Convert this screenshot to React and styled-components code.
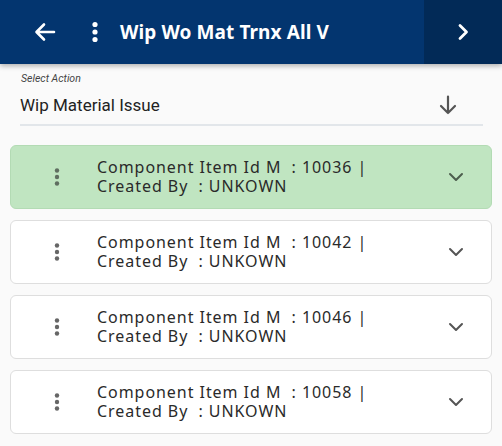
import React from "react";
import styled, { createGlobalStyle } from "styled-components";

const Global = createGlobalStyle`
  html, body {
    margin: 0;
    padding: 0;
    background: #fafafa;
    font-family: "Noto Sans", "Open Sans", sans-serif;
  }
`;

const Page = styled.div`
  width: 502px;
  height: 446px;
  overflow: hidden;
  background: #fafafa;
`;

const Header = styled.header`
  height: 64px;
  display: flex;
  background: #03356f;
  box-shadow: 0 2px 5px rgba(0, 0, 0, 0.3);
  position: relative;
  z-index: 1;
`;

const HeaderMain = styled.div`
  flex: 1;
  display: flex;
  align-items: center;
  padding-left: 33px;
`;

const IconBtn = styled.div`
  width: ${(p) => p.w || 24}px;
  margin-right: ${(p) => p.mr || 0}px;
  display: flex;
  align-items: center;
  justify-content: center;
  color: #fff;
`;

const Title = styled.h1`
  margin: 0;
  font-size: 19px;
  font-weight: 700;
  color: #fff;
  letter-spacing: 0.1px;
`;

const NextBox = styled.div`
  width: 78px;
  display: flex;
  align-items: center;
  justify-content: center;
  background: #022a57;
`;

const ActionField = styled.div`
  margin: 0 19px 0 20px;
  padding-top: 9px;
  border-bottom: 2px solid #e2e6ea;
`;

const FieldLabel = styled.div`
  font-family: Roboto, sans-serif;
  font-style: italic;
  font-size: 10.5px;
  color: #444;
  padding-left: 1px;
  line-height: 12px;
`;

const FieldRow = styled.div`
  display: flex;
  align-items: center;
  justify-content: space-between;
  height: 39px;
`;

const FieldValue = styled.div`
  font-family: Roboto, sans-serif;
  font-size: 17px;
  color: #222;
`;

const List = styled.div`
  display: flex;
  flex-direction: column;
  gap: 11px;
  padding: 19px 10px 0 10px;
`;

const Card = styled.div`
  height: 64px;
  box-sizing: border-box;
  border-radius: 6px;
  border: 1px solid ${(p) => (p.active ? "#b3dbb4" : "#dedede")};
  background: ${(p) => (p.active ? "#c0e5c1" : "#fff")};
  display: flex;
  align-items: center;
`;

const CardMenu = styled.div`
  width: 86px;
  display: flex;
  justify-content: center;
  padding-left: 6px;
  box-sizing: border-box;
`;

const CardText = styled.div`
  flex: 1;
  font-size: 16px;
  line-height: 19px;
  letter-spacing: 0.95px;
  color: #2a2a2a;
  white-space: pre;
`;

const CardChevron = styled.div`
  width: 70px;
  display: flex;
  justify-content: center;
`;

const Dots = ({ color, r = 2.2, gap = 6.5 }) => (
  <svg width="8" height="22" viewBox="0 0 8 22">
    <circle cx="4" cy={11 - gap} r={r} fill={color} />
    <circle cx="4" cy="11" r={r} fill={color} />
    <circle cx="4" cy={11 + gap} r={r} fill={color} />
  </svg>
);

const items = ["10036", "10042", "10046", "10058"];

export default function App() {
  return (
    <Page>
      <Global />
      <Header>
        <HeaderMain>
          <IconBtn w={24} mr={34}>
            <svg width="22" height="20" viewBox="0 0 22 20" fill="none" stroke="#fff" strokeWidth="2.6" strokeLinecap="round" strokeLinejoin="round">
              <path d="M20 10H3M10 2.5L2.5 10l7.5 7.5" />
            </svg>
          </IconBtn>
          <IconBtn w={8} mr={21}>
            <svg width="8" height="22" viewBox="0 0 8 22">
              <circle cx="4" cy="3.5" r="2.6" fill="#fff" />
              <circle cx="4" cy="11" r="2.6" fill="#fff" />
              <circle cx="4" cy="18.5" r="2.6" fill="#fff" />
            </svg>
          </IconBtn>
          <Title>Wip Wo Mat Trnx All V</Title>
        </HeaderMain>
        <NextBox>
          <svg width="12" height="18" viewBox="0 0 12 18" fill="none" stroke="#fff" strokeWidth="2.8" strokeLinecap="round" strokeLinejoin="round">
            <path d="M3 2.5L9.5 9 3 15.5" />
          </svg>
        </NextBox>
      </Header>
      <ActionField>
        <FieldLabel>Select Action</FieldLabel>
        <FieldRow>
          <FieldValue>Wip Material Issue</FieldValue>
          <svg width="18" height="20" viewBox="0 0 18 20" fill="none" stroke="#555" strokeWidth="2.2" strokeLinecap="round" strokeLinejoin="round" style={{ marginRight: 26 }}>
            <path d="M9 1.5V18M2 11l7 7 7-7" />
          </svg>
        </FieldRow>
      </ActionField>
      <List>
        {items.map((id, i) => (
          <Card key={id} active={i === 0}>
            <CardMenu>
              <Dots color={i === 0 ? "#5f6e60" : "#666"} />
            </CardMenu>
            <CardText>{`Component Item Id M  : ${id} |\nCreated By  : UNKOWN`}</CardText>
            <CardChevron>
              <svg width="16" height="10" viewBox="0 0 16 10" fill="none" stroke={i === 0 ? "#4d5e4e" : "#555"} strokeWidth="2" strokeLinecap="round" strokeLinejoin="round">
                <path d="M2 2l6 6 6-6" />
              </svg>
            </CardChevron>
          </Card>
        ))}
      </List>
    </Page>
  );
}
